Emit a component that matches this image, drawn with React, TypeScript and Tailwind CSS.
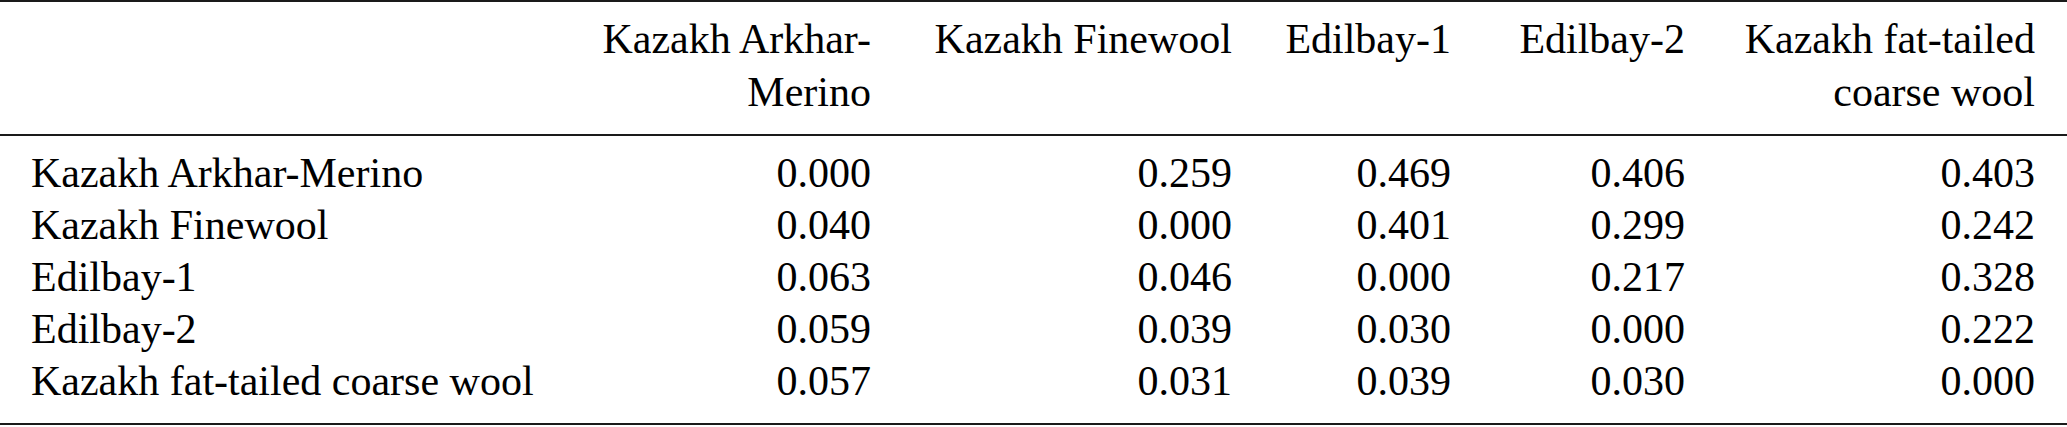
import React from "react";

const cols = ["Kazakh Arkhar-Merino", "Kazakh Finewool", "Edilbay-1", "Edilbay-2", "Kazakh fat-tailed coarse wool"];

const data: string[][] = [
  ["0.000", "0.259", "0.469", "0.406", "0.403"],
  ["0.040", "0.000", "0.401", "0.299", "0.242"],
  ["0.063", "0.046", "0.000", "0.217", "0.328"],
  ["0.059", "0.039", "0.030", "0.000", "0.222"],
  ["0.057", "0.031", "0.039", "0.030", "0.000"],
];

const grid = "grid grid-cols-[540px_300px_361px_219px_234px_350px] pl-[31px] pr-[32px]";

export default function App() {
  return (
    <div className="w-[2067px] h-[427px] bg-white text-black font-serif text-[42px]">
      <div className="font-[family-name:Liberation_Serif,Times_New_Roman,Georgia,Cambria,serif]">
        <div className="border-t-[2px] border-[#1a1a1a]" />
        <div className={`${grid} pt-[11px] pb-[15px] leading-[53px]`}>
          <div />
          <div className="text-right">Kazakh Arkhar-<br />Merino</div>
          <div className="text-right">Kazakh Finewool</div>
          <div className="text-right">Edilbay-1</div>
          <div className="text-right">Edilbay-2</div>
          <div className="text-right">Kazakh fat-tailed<br />coarse wool</div>
        </div>
        <div className="border-t-[2px] border-[#1a1a1a]" />
        <div className="pt-[11px] pb-[16px] leading-[52px]">
          {data.map((row, i) => (
            <div key={i} className={grid}>
              <div className="text-left whitespace-nowrap">{cols[i]}</div>
              {row.map((v, j) => (
                <div key={j} className="text-right">{v}</div>
              ))}
            </div>
          ))}
        </div>
        <div className="border-t-[2px] border-[#1a1a1a]" />
      </div>
    </div>
  );
}
